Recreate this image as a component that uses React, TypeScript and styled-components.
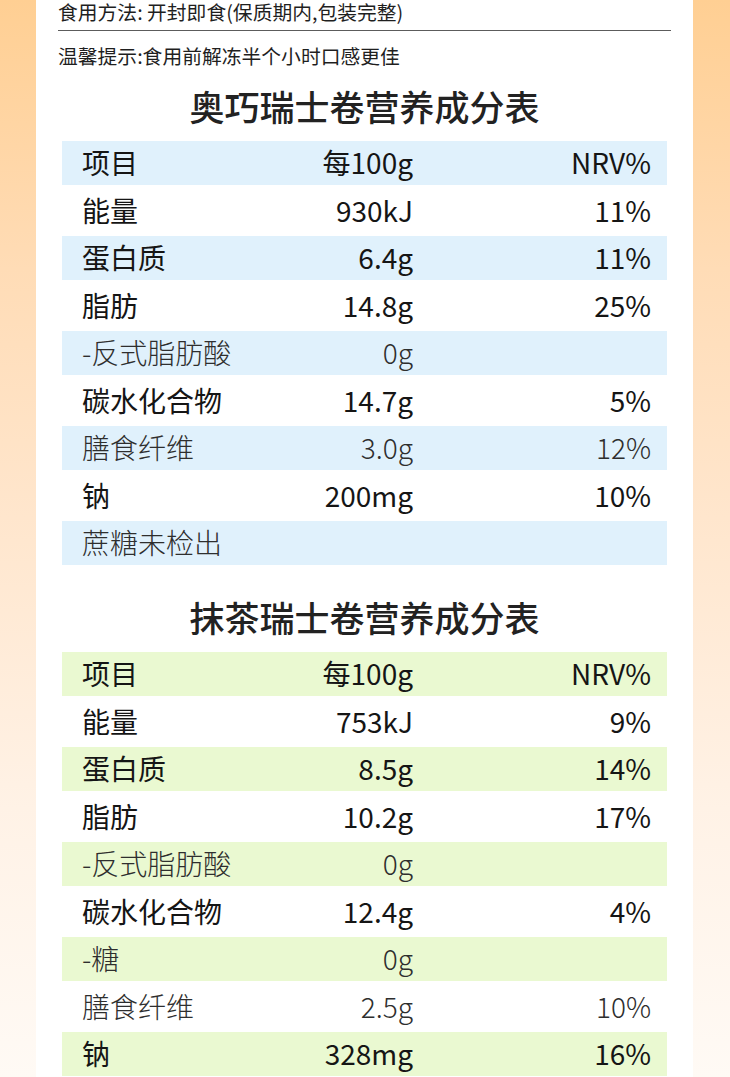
import React from "react";
import styled, { createGlobalStyle, css } from "styled-components";

const GlobalStyle = createGlobalStyle`
  html, body {
    margin: 0;
    padding: 0;
  }
  body {
    font-family: "Noto Sans CJK SC", "Noto Sans", sans-serif;
    color: #1c1c1c;
  }
`;

const Page = styled.div`
  min-height: 1077px;
  padding: 0 37px 0 36px;
  background: linear-gradient(180deg, #ffcf93 0%, #ffdcb6 25%, #ffe6cd 48%, #fff2e6 75%, #fffaf5 100%);
  box-sizing: border-box;
`;

const Panel = styled.div`
  background: #ffffff;
  min-height: 1077px;
  padding: 1px 22px 0;
  display: flex;
  flex-direction: column;
  box-sizing: border-box;
`;

const Note = styled.div`
  font-size: 19.8px;
  line-height: 22px;
  color: #1f1f1f;
  white-space: nowrap;
`;

const Divider = styled.div`
  height: 1px;
  background: #5c5c5c;
  margin: 7px 0 14px;
`;

const Title = styled.h2<{ $top: number }>`
  margin: ${(p) => p.$top}px 0 0;
  font-size: 35px;
  line-height: 40px;
  font-weight: 500;
  color: #222;
  text-align: center;
`;

const Table = styled.div`
  margin: 15px 4px 0;
  display: flex;
  flex-direction: column;
`;

type Tone = "blue" | "green";

const Row = styled.div<{ $tint?: Tone; $light: boolean }>`
  display: grid;
  grid-template-columns: 200px 131px 1fr;
  align-items: center;
  padding: 0 16px 2px 20px;
  box-sizing: border-box;
  height: ${(p) => (p.$tint ? 44 : 51)}px;
  font-size: 28px;
  line-height: 1;
  font-weight: ${(p) => (p.$light ? 300 : 400)};
  color: ${(p) => (p.$light ? "#2e2e2e" : "#151515")};
  ${(p) =>
    p.$tint === "blue" &&
    css`
      background: #e0f1fc;
    `}
  ${(p) =>
    p.$tint === "green" &&
    css`
      background: #eaf9d1;
    `}
`;

const Label = styled.span`
  white-space: nowrap;
`;

const Num = styled.span`
  text-align: right;
  white-space: nowrap;
`;

type Item = [string, string, string, boolean];

const oreo: Item[] = [
  ["项目", "每100g", "NRV%", false],
  ["能量", "930kJ", "11%", false],
  ["蛋白质", "6.4g", "11%", false],
  ["脂肪", "14.8g", "25%", false],
  ["-反式脂肪酸", "0g", "", true],
  ["碳水化合物", "14.7g", "5%", false],
  ["膳食纤维", "3.0g", "12%", true],
  ["钠", "200mg", "10%", false],
  ["蔗糖未检出", "", "", true],
];

const matcha: Item[] = [
  ["项目", "每100g", "NRV%", false],
  ["能量", "753kJ", "9%", false],
  ["蛋白质", "8.5g", "14%", false],
  ["脂肪", "10.2g", "17%", false],
  ["-反式脂肪酸", "0g", "", true],
  ["碳水化合物", "12.4g", "4%", false],
  ["-糖", "0g", "", true],
  ["膳食纤维", "2.5g", "10%", true],
  ["钠", "328mg", "16%", false],
];

function NutritionTable({ items, tone }: { items: Item[]; tone: Tone }) {
  return (
    <Table>
      {items.map(([label, per, nrv, light], i) => (
        <Row key={label} $tint={i % 2 === 0 ? tone : undefined} $light={light}>
          <Label>{label}</Label>
          <Num>{per}</Num>
          <Num>{nrv}</Num>
        </Row>
      ))}
    </Table>
  );
}

export default function App() {
  return (
    <>
      <GlobalStyle />
      <Page>
        <Panel>
          <Note>食用方法: 开封即食(保质期内,包装完整)</Note>
          <Divider />
          <Note>温馨提示:食用前解冻半个小时口感更佳</Note>
          <Title $top={19}>奥巧瑞士卷营养成分表</Title>
          <NutritionTable items={oreo} tone="blue" />
          <Title $top={32}>抹茶瑞士卷营养成分表</Title>
          <NutritionTable items={matcha} tone="green" />
        </Panel>
      </Page>
    </>
  );
}
